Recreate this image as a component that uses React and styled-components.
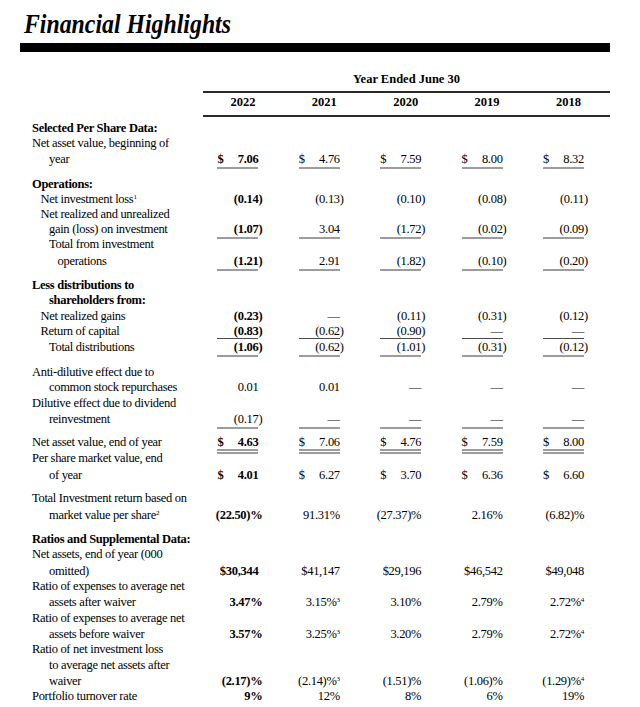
import React from 'react';
import styled, { createGlobalStyle, css } from 'styled-components';

const GlobalStyle = createGlobalStyle`
  html, body {
    margin: 0;
    padding: 0;
    background: #fff;
  }
  body {
    font-family: 'Liberation Serif', 'Times New Roman', serif;
    color: #000;
  }
`;

const YEARS = ['2022', '2021', '2020', '2019', '2018'];

// values: "$ x" puts the dollar sign flush left, "^n" is a footnote mark
const ROWS = [
  { label: 'Selected Per Share Data:', head: true, mt: 4 },
  { label: 'Net asset value, beginning of' },
  { label: 'year', indent: 2, mt: 1, line: 'single', values: ['$ 7.06', '$ 4.76', '$ 7.59', '$ 8.00', '$ 8.32'] },
  { label: 'Operations:', head: true, mt: 10 },
  { label: 'Net investment loss', note: '1', indent: 1, values: ['(0.14)', '(0.13)', '(0.10)', '(0.08)', '(0.11)'] },
  { label: 'Net realized and unrealized', indent: 1 },
  { label: 'gain (loss) on investment', indent: 2, mt: -0.5, line: 'single', values: ['(1.07)', '3.04', '(1.72)', '(0.02)', '(0.09)'] },
  { label: 'Total from investment', indent: 2 },
  { label: 'operations', indent: 3, mt: 2.5, line: 'single', values: ['(1.21)', '2.91', '(1.82)', '(0.10)', '(0.20)'] },
  { label: 'Less distributions to', head: true, mt: 9 },
  { label: 'shareholders from:', head: true, indent: 2 },
  { label: 'Net realized gains', indent: 1, mt: 1, values: ['(0.23)', '—', '(0.11)', '(0.31)', '(0.12)'] },
  { label: 'Return of capital', indent: 1, line: 'thin', values: ['(0.83)', '(0.62)', '(0.90)', '—', '—'] },
  { label: 'Total distributions', indent: 2, mt: 1, line: 'single', values: ['(1.06)', '(0.62)', '(1.01)', '(0.31)', '(0.12)'] },
  { label: 'Anti-dilutive effect due to', mt: 10 },
  { label: 'common stock repurchases', indent: 2, plain: true, values: ['0.01', '0.01', '—', '—', '—'] },
  { label: 'Dilutive effect due to dividend', mt: 1 },
  { label: 'reinvestment', indent: 2, mt: 1, line: 'single', plain: true, values: ['(0.17)', '—', '—', '—', '—'] },
  { label: 'Net asset value, end of year', mt: 8, line: 'double', values: ['$ 4.63', '$ 7.06', '$ 4.76', '$ 7.59', '$ 8.00'] },
  { label: 'Per share market value, end', mt: 1 },
  { label: 'of year', indent: 2, mt: 2, values: ['$ 4.01', '$ 6.27', '$ 3.70', '$ 6.36', '$ 6.60'] },
  { label: 'Total Investment return based on', mt: 8 },
  { label: 'market value per share', note: '2', indent: 2, mt: 2, values: ['(22.50)%', '91.31%', '(27.37)%', '2.16%', '(6.82)%'] },
  { label: 'Ratios and Supplemental Data:', head: true, mt: 9 },
  { label: 'Net assets, end of year (000' },
  { label: 'omitted)', indent: 2, mt: 2, values: ['$30,344', '$41,147', '$29,196', '$46,542', '$49,048'] },
  { label: 'Ratio of expenses to average net' },
  { label: 'assets after waiver', indent: 2, mt: 1, values: ['3.47%', '3.15%^3', '3.10%', '2.79%', '2.72%^4'] },
  { label: 'Ratio of expenses to average net', mt: 1 },
  { label: 'assets before waiver', indent: 2, mt: 1, values: ['3.57%', '3.25%^3', '3.20%', '2.79%', '2.72%^4'] },
  { label: 'Ratio of net investment loss' },
  { label: 'to average net assets after', indent: 2, mt: 1 },
  { label: 'waiver', indent: 2, mt: 1, values: ['(2.17)%', '(2.14)%^3', '(1.51)%', '(1.06)%', '(1.29)%^4'] },
  { label: 'Portfolio turnover rate', values: ['9%', '12%', '8%', '6%', '19%'] }
];

const Page = styled.div`
  width: 640px;
  box-sizing: border-box;
  padding: 9px 30px 0 20px;
`;

const Title = styled.h1`
  margin: 0 0 0 4px;
  font-size: 28px;
  line-height: 30px;
  font-style: italic;
  font-weight: 700;
  white-space: nowrap;
  transform: scaleX(0.85);
  transform-origin: left center;
`;

const Bar = styled.div`
  height: 9px;
  margin-top: 4px;
  background: #000;
`;

const HeadGrid = styled.div`
  display: grid;
  grid-template-columns: 183px repeat(5, 1fr);
  font-size: 12.5px;
  line-height: 15px;
  font-weight: 700;
`;

const PeriodTitle = styled.div`
  grid-column: 2 / -1;
  margin-top: 20px;
  padding-bottom: 4px;
  text-align: center;
  border-bottom: 2px solid #2a2a2a;
`;

const YearCell = styled.div`
  padding: 2px 29px 5px 0;
  text-align: right;
  border-bottom: 2px solid #2a2a2a;
`;

const Row = styled.div`
  display: grid;
  grid-template-columns: 183px repeat(5, 1fr);
  margin-top: ${p => p.$mt || 0}px;
  font-size: 12.5px;
  letter-spacing: -0.3px;
  line-height: 15px;
`;

const Label = styled.div`
  padding-left: ${p => 12 + p.$indent * 8.5}px;
  font-weight: ${p => (p.$head ? 700 : 400)};
  white-space: nowrap;
`;

const Cell = styled.div`
  display: flex;
  justify-content: flex-end;
  padding-right: ${p => (p.$nudge ? 22 : 26)}px;
  font-weight: ${p => (p.$bold ? 700 : 400)};
`;

const lines = {
  single: css`
    top: 15px;
    height: 2px;
    background: #9c9c9c;
  `,
  thin: css`
    top: 14px;
    height: 1px;
    background: #4a4a4a;
  `,
  double: css`
    top: 14px;
    height: 1px;
    border-top: 2px solid #9c9c9c;
    border-bottom: 2px solid #9c9c9c;
  `
};

const Figure = styled.span`
  position: relative;
  display: flex;
  justify-content: flex-end;
  min-width: 41px;
  white-space: nowrap;

  ${p =>
    p.$line &&
    css`
      &::after {
        content: '';
        position: absolute;
        left: 0;
        right: 0;
        ${lines[p.$line]}
      }
    `}
`;

const Dollar = styled.span`
  margin-right: auto;
`;

const Hang = styled.span`
  flex: none;
  width: 0;
  overflow: visible;
`;

const Sup = styled.sup`
  font-size: 7px;
  line-height: 0;
  vertical-align: 4px;
`;

const Value = ({ text, line }) => {
  let body = text;
  let dollar = false;
  let note = null;
  let hang = null;

  if (body.startsWith('$ ')) {
    dollar = true;
    body = body.slice(2);
  }
  if (body.includes('^')) {
    [body, note] = body.split('^');
  }
  if (body.endsWith(')')) {
    hang = ')';
    body = body.slice(0, -1);
  }

  return (
    <Figure $line={line}>
      {dollar && <Dollar>$</Dollar>}
      <span>
        {body}
        {note && <Sup>{note}</Sup>}
      </span>
      {hang && <Hang>{hang}</Hang>}
    </Figure>
  );
};

const App = () => (
  <Page>
    <GlobalStyle />
    <Title>Financial Highlights</Title>
    <Bar />

    <HeadGrid>
      <PeriodTitle>Year Ended June 30</PeriodTitle>
      <div />
      {YEARS.map(year => (
        <YearCell key={year}>{year}</YearCell>
      ))}
    </HeadGrid>

    {ROWS.map((row, i) => (
      <Row key={i} $mt={row.mt}>
        <Label $head={row.head} $indent={row.indent || 0}>
          {row.label}
          {row.note && <Sup>{row.note}</Sup>}
        </Label>
        {row.values &&
          row.values.map((v, j) => (
            <Cell key={j} $bold={j === 0 && !row.plain} $nudge={j === 0 && v.endsWith('%')}>
              <Value text={v} line={row.line} />
            </Cell>
          ))}
      </Row>
    ))}
  </Page>
);

export default App;
